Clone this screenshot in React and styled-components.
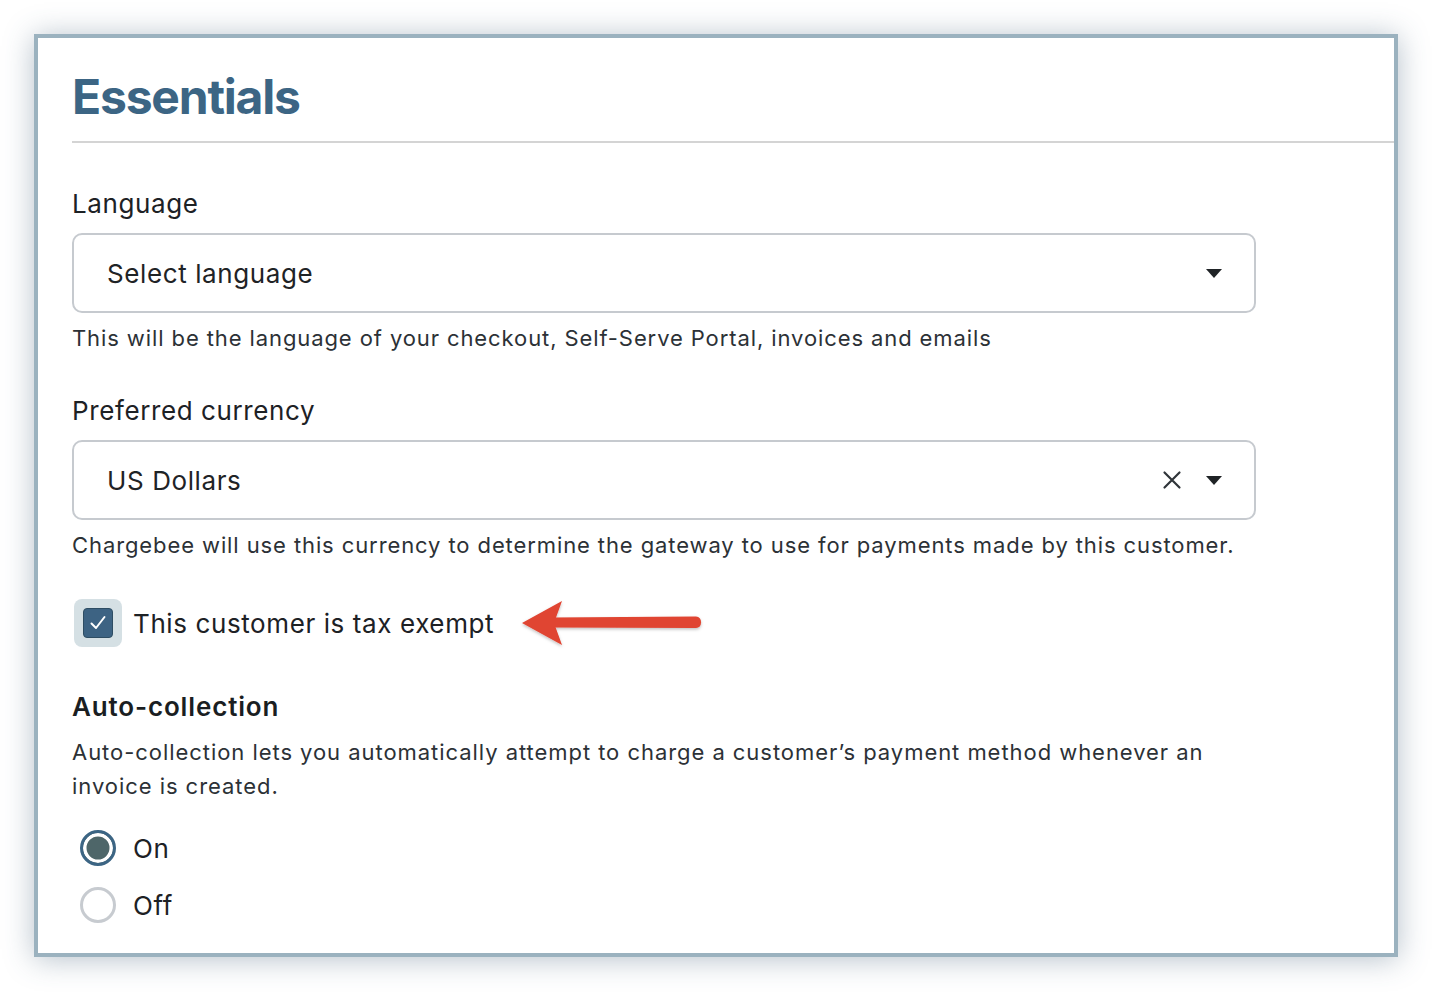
import React from 'react'
import styled, { createGlobalStyle } from 'styled-components'

const GlobalStyle = createGlobalStyle`
    html, body {
        margin: 0;
        padding: 0;
        background: #ffffff;
    }
    body {
        font-family: Inter, "Noto Sans", "Liberation Sans", sans-serif;
        color: #1d2125;
    }
`;

function Caret() {
    return (
        <svg width="16" height="9" viewBox="0 0 16 9">
            <path d="M0 0 H16 L8 9 Z" fill="#1f2326" />
        </svg>
    )
}

function ClearIcon() {
    return (
        <svg width="20" height="20" viewBox="0 0 20 20">
            <path d="M2.5 2.5 L17.5 17.5 M17.5 2.5 L2.5 17.5" stroke="#30353a" strokeWidth="2.2" strokeLinecap="round" />
        </svg>
    )
}

function PointerArrow() {
    return (
        <svg width="186" height="52" viewBox="0 0 186 52">
            <defs>
                <filter id="arrowShade" x="-10%" y="-30%" width="120%" height="160%">
                    <feDropShadow dx="0" dy="1.5" stdDeviation="1.5" floodColor="#000" floodOpacity="0.25" />
                </filter>
            </defs>
            <g filter="url(#arrowShade)" fill="#e04431">
                <path d="M2 26 L42 4 L34 26 L42 48 Z" />
                <path d="M32 20.5 L176 19.5 A5.8 5.8 0 0 1 176 31 L32 30.5 Z" />
            </g>
        </svg>
    )
}

function Essentials() {
    const [taxExempt, setTaxExempt] = React.useState(true)
    const [autoCollect, setAutoCollect] = React.useState('on')

    return (
        <Page>
            <Frame>
                <Heading>Essentials</Heading>
                <Divider />
                <Content>
                    <Label $first>Language</Label>
                    <SelectBox>
                        <SelectValue>Select language</SelectValue>
                        <SelectIcons>
                            <Caret />
                        </SelectIcons>
                    </SelectBox>
                    <Hint>This will be the language of your checkout, Self-Serve Portal, invoices and emails</Hint>

                    <Label>Preferred currency</Label>
                    <SelectBox>
                        <SelectValue>US Dollars</SelectValue>
                        <SelectIcons>
                            <ClearIcon />
                            <Caret />
                        </SelectIcons>
                    </SelectBox>
                    <Hint>Chargebee will use this currency to determine the gateway to use for payments made by this customer.</Hint>

                    <CheckRow>
                        <CheckRing onClick={() => setTaxExempt(!taxExempt)}>
                            <CheckBox $checked={taxExempt}>
                                {taxExempt && (
                                    <svg width="20" height="20" viewBox="0 0 20 20">
                                        <path d="M3.5 10.5 L8 15 L16.5 4" stroke="#fff" strokeWidth="2" fill="none" strokeLinecap="round" strokeLinejoin="round" />
                                    </svg>
                                )}
                            </CheckBox>
                        </CheckRing>
                        <CheckText>This customer is tax exempt</CheckText>
                        <ArrowSlot>
                            <PointerArrow />
                        </ArrowSlot>
                    </CheckRow>

                    <SubHeading>Auto-collection</SubHeading>
                    <Description>
                        Auto-collection lets you automatically attempt to charge a customer’s payment method whenever an invoice is created.
                    </Description>

                    <RadioList>
                        {['on', 'off'].map((value) => (
                            <RadioRow key={value} onClick={() => setAutoCollect(value)}>
                                <RadioCircle $checked={autoCollect === value} />
                                <RadioText>{value === 'on' ? 'On' : 'Off'}</RadioText>
                            </RadioRow>
                        ))}
                    </RadioList>
                </Content>
            </Frame>
        </Page>
    )
}

const Page = styled.div`
    padding: 34px;
    min-height: 100vh;
    box-sizing: border-box;
`;

const Frame = styled.div`
    width: 1364px;
    height: 923px;
    box-sizing: border-box;
    border: 4px solid #9bb2bf;
    background: #fff;
    box-shadow: 0 2px 28px rgba(60, 90, 115, 0.38);
    padding-top: 30px;
    overflow: hidden;
`;

const Heading = styled.h1`
    margin: 0 0 0 34px;
    font-size: 48px;
    line-height: 58px;
    font-weight: 700;
    color: #3c6584;
    letter-spacing: -1.2px;
`;

const Divider = styled.div`
    height: 2px;
    background: #d4d4d4;
    margin: 15px 0 0 34px;
`;

const Content = styled.div`
    padding: 0 34px;
    width: 1184px;
`;

const Label = styled.div`
    font-size: 26px;
    line-height: 32px;
    letter-spacing: 0.6px;
    margin-top: ${(p) => (p.$first ? '45px' : '43px')};
    margin-bottom: 13px;
    color: #1d2125;
`;

const SelectBox = styled.div`
    height: 80px;
    box-sizing: border-box;
    border: 2px solid #c6cacf;
    border-radius: 10px;
    display: flex;
    align-items: center;
    padding: 0 32px 0 33px;
`;

const SelectValue = styled.div`
    flex: 1;
    font-size: 26px;
    letter-spacing: 0.6px;
    color: #1f2326;
`;

const SelectIcons = styled.div`
    display: flex;
    align-items: center;
    gap: 24px;
`;

const Hint = styled.div`
    font-size: 22px;
    line-height: 28px;
    margin-top: 11px;
    color: #2c3136;
    letter-spacing: 0.9px;
`;

const CheckRow = styled.div`
    display: flex;
    align-items: center;
    margin-top: 38px;
    margin-left: 2px;
`;

const CheckRing = styled.div`
    width: 48px;
    height: 48px;
    border-radius: 8px;
    background: #d5e0e4;
    display: flex;
    align-items: center;
    justify-content: center;
    cursor: pointer;
`;

const CheckBox = styled.div`
    width: 30px;
    height: 30px;
    box-sizing: border-box;
    border-radius: 4px;
    border: 1.5px solid ${(p) => (p.$checked ? '#2e4d63' : '#c6cacf')};
    background: ${(p) => (p.$checked ? '#3d6383' : '#fff')};
    display: flex;
    align-items: center;
    justify-content: center;
`;

const CheckText = styled.span`
    font-size: 26px;
    letter-spacing: 0.6px;
    margin-left: 11px;
    color: #1d2125;
`;

const ArrowSlot = styled.span`
    display: flex;
    margin-left: 26px;
`;

const SubHeading = styled.div`
    font-size: 26px;
    line-height: 32px;
    font-weight: 600;
    letter-spacing: 0.85px;
    margin-top: 42px;
    color: #1a1e22;
`;

const Description = styled.p`
    margin: 12px 0 0;
    font-size: 22px;
    line-height: 34px;
    color: #2c3136;
    letter-spacing: 0.95px;
`;

const RadioList = styled.div`
    display: flex;
    flex-direction: column;
    gap: 21px;
    margin-top: 27px;
    margin-left: 8px;
`;

const RadioRow = styled.div`
    display: flex;
    align-items: center;
    cursor: pointer;
`;

const RadioCircle = styled.span`
    width: 36px;
    height: 36px;
    box-sizing: border-box;
    border-radius: 50%;
    border: 3px solid ${(p) => (p.$checked ? '#3c6584' : '#c7cbd0')};
    background: ${(p) => (p.$checked ? '#4e6669' : '#fff')};
    box-shadow: ${(p) => (p.$checked ? 'inset 0 0 0 3.5px #fff' : 'none')};
`;

const RadioText = styled.span`
    font-size: 26px;
    letter-spacing: 0.6px;
    margin-left: 17px;
    color: #1d2125;
`;

export default function App() {
    return (
        <>
            <GlobalStyle />
            <Essentials />
        </>
    )
}
